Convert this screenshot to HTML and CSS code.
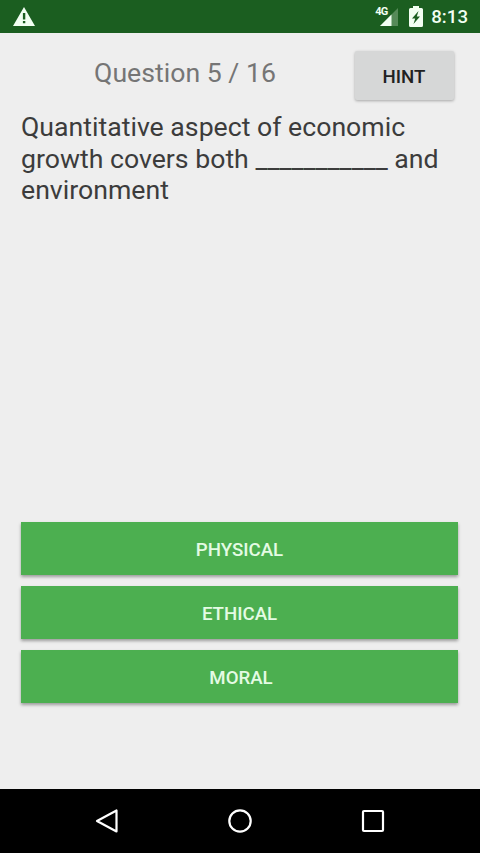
FILE: index.html
```html
<!DOCTYPE html>
<html lang="en">
<head>
<meta charset="utf-8">
<title>Quiz</title>
<link rel="stylesheet" href="styles.css">
</head>
<body>
<header class="status">
  <svg class="warning" width="22" height="19" viewBox="0 0 22 19"><path fill="#f2fff2" fill-rule="evenodd" d="M11 0 22 19H0ZM9.900 6v6.500h2.400V6ZM9.900 14v2.300h2.400V14Z"/></svg>
  <div class="indicators">
    <div class="signal">
      <svg width="20" height="18" viewBox="0 0 20 18"><path fill="#568a58" d="M19 0v18H1Z"/><path fill="#f2fff2" d="M12.500 6.500V18H1Z"/></svg>
      <span class="network">4G</span>
    </div>
    <svg class="battery" width="14" height="21" viewBox="0 0 14 21"><path fill="#f2fff2" d="M4 0h6v2h2.500q1.500 0 1.500 1.500v16q0 1.500-1.500 1.500h-11Q0 21 0 19.500v-16Q0 2 1.500 2H4Z"/><path fill="#1b5e20" d="M9.500 5 3 12.500h3.200L4.500 18 11 10.500H7.800Z"/></svg>
    <span class="clock">8:13</span>
  </div>
</header>
<main class="quiz">
  <div class="top">
    <h1 class="progress">Question 5 / 16</h1>
    <button class="hint">HINT</button>
  </div>
  <p class="question">Quantitative aspect of economic growth covers both ___________ and environment</p>
  <div class="answers">
    <button class="answer">PHYSICAL</button>
    <button class="answer">ETHICAL</button>
    <button class="answer answer-wide">MORAL</button>
  </div>
</main>
<nav class="navbar">
  <svg width="26" height="26" viewBox="0 0 26 26"><path d="M22.500 2.500v21L3 13Z"/></svg>
  <svg width="26" height="26" viewBox="0 0 26 26"><circle cx="13" cy="13" r="10.700"/></svg>
  <svg width="26" height="26" viewBox="0 0 26 26"><rect x="3" y="3" width="20" height="20" rx="1"/></svg>
</nav>
</body>
</html>
```
FILE: styles.css
```css
* { box-sizing: border-box; }

body {
  margin: 0;
  height: 853px;
  display: flex;
  flex-direction: column;
  overflow: hidden;
  background: #eeeeee;
  font-family: Roboto, "Liberation Sans", sans-serif;
}

svg { display: block; }

.status {
  height: 33px;
  flex: none;
  display: flex;
  justify-content: space-between;
  align-items: flex-start;
  padding: 0 12px 0 13px;
  background: #1b5e20;
  color: #f2fff2;
}

.warning { margin-top: 7px; }

.indicators { display: flex; }

.signal {
  position: relative;
  margin: 8px 10px 0 0;
}

.network {
  position: absolute;
  left: -4px;
  top: -2px;
  font-size: 11px;
  line-height: 11px;
  font-weight: 700;
  letter-spacing: -0.8px;
}

.battery { margin: 6px 8px 0 0; }

.clock {
  font-size: 18.67px;
  line-height: 34px;
  font-weight: 500;
}

.quiz {
  flex: 1;
  display: flex;
  flex-direction: column;
  padding: 18px 22px 86px 21px;
}

.top {
  display: flex;
  height: 50px;
}

.progress {
  flex: 1;
  margin: 0;
  padding-right: 6px;
  text-align: center;
  font-size: 26.67px;
  line-height: 45px;
  font-weight: 400;
  color: #757575;
}

.hint {
  width: 99px;
  height: 49px;
  margin-right: 4px;
  padding: 2px 1px 0 0;
  border: 0;
  border-radius: 2px;
  background: #d6d7d7;
  box-shadow: 0 1px 3px rgba(0, 0, 0, 0.3);
  font: 500 18.67px Roboto, sans-serif;
  color: #212121;
}

.question {
  margin: 11px -4px 0 0;
  font-size: 26.67px;
  line-height: 31.5px;
  color: #3c3c3c;
}

.answers {
  display: grid;
  gap: 11px;
  margin-top: auto;
}

.answer {
  height: 53px;
  padding: 2px 0 0;
  border: 0;
  background: #4caf50;
  box-shadow: 0 2px 3px rgba(0, 0, 0, 0.35);
  font: 500 18.67px Roboto, sans-serif;
  color: #e4fbe4;
}

.answer-wide { padding-left: 3px; }

.navbar {
  height: 64px;
  flex: none;
  display: flex;
  justify-content: center;
  align-items: center;
  gap: 107px;
  padding: 0 1px 1px 0;
  background: #000;
}

.navbar svg {
  fill: none;
  stroke: #fff;
  stroke-width: 2.2;
  stroke-linejoin: round;
}
```
